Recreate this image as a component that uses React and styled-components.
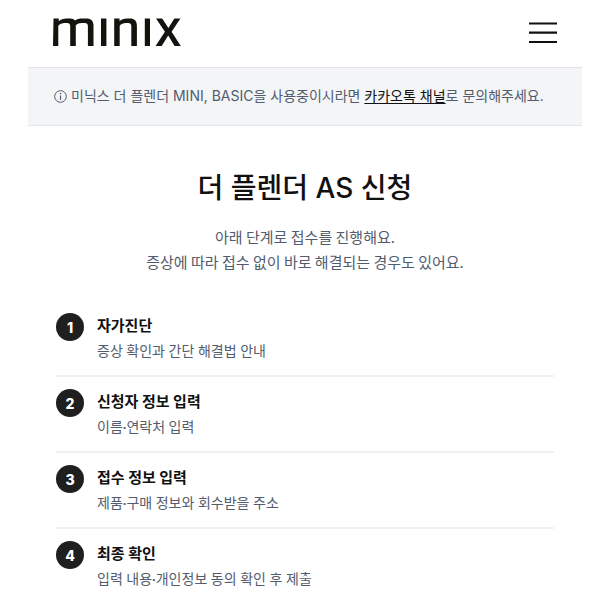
import React from "react";
import styled, { createGlobalStyle } from "styled-components";

const COLOR = {
  INK: "#111111",
  BADGE: "#1f1f1f",
  SLATE: "#525c6e",
  NOTICE: "#f4f5f7",
  LINE: "#e2e4e9",
  DIVIDER: "#f0f1f2",
};

const FONT = {
  MIXED: `Inter, "Noto Sans CJK KR", sans-serif`,
  KOREAN: `"Noto Sans CJK KR", sans-serif`,
  DETAIL: `Lato, "Noto Sans CJK KR", sans-serif`,
};

const STEPS = [
  { title: "자가진단", text: "증상 확인과 간단 해결법 안내" },
  { title: "신청자 정보 입력", text: "이름·연락처 입력" },
  { title: "접수 정보 입력", text: "제품·구매 정보와 회수받을 주소" },
  { title: "최종 확인", text: "입력 내용·개인정보 동의 확인 후 제출" },
];

const GlobalStyle = createGlobalStyle`
  * {
    box-sizing: border-box;
  }

  body {
    margin: 0;
    background-color: #ffffff;
    color: ${COLOR.INK};
    font-family: ${FONT.MIXED};
    word-break: keep-all;
  }
`;

const Page = styled.div`
  padding: 0 18px 0 28px;
`;

const Header = styled.header`
  display: flex;
  justify-content: space-between;
  align-items: center;
  padding: 16px 24px 18px;
`;

const HomeLink = styled.a`
  display: flex;
`;

const MenuButton = styled.button`
  display: flex;
  padding: 0;
  border: 0;
  background: none;
  cursor: pointer;
`;

const Notice = styled.p`
  display: flex;
  align-items: center;
  gap: 4px;
  margin: 0;
  padding: 17px 26px 18px;
  border-top: 1px solid ${COLOR.LINE};
  border-bottom: 1px solid ${COLOR.LINE};
  background-color: ${COLOR.NOTICE};
  color: ${COLOR.SLATE};
  font-size: 14px;
  line-height: 22px;

  svg {
    flex-shrink: 0;
  }

  a {
    color: ${COLOR.INK};
    text-decoration: underline;
    text-underline-offset: 2px;
  }
`;

const Intro = styled.section`
  padding: 40px 28px 27px;
  text-align: center;
`;

const Title = styled.h1`
  margin: 0 0 14px;
  font-size: 28px;
  font-weight: 500;
  line-height: 44px;
`;

const Lead = styled.p`
  margin: 0;
  color: ${COLOR.SLATE};
  font-family: ${FONT.KOREAN};
  font-size: 15px;
  line-height: 25px;
`;

const StepList = styled.ol`
  margin: 0;
  padding: 0 28px;
  list-style: none;
`;

const Step = styled.li`
  display: flex;
  gap: 13px;
  padding: 12px 0;
  border-bottom: 2px solid ${COLOR.DIVIDER};

  &:last-child {
    border-bottom: 0;
  }
`;

const Badge = styled.span`
  display: flex;
  flex-shrink: 0;
  align-items: center;
  justify-content: center;
  width: 28px;
  height: 28px;
  border-radius: 50%;
  background-color: ${COLOR.BADGE};
  color: #ffffff;
  font-size: 14px;
  font-weight: 800;
`;

const StepTitle = styled.h2`
  margin: 0;
  font-size: 15px;
  font-weight: 700;
  line-height: 25px;
`;

const StepText = styled.p`
  margin: 0;
  color: ${COLOR.SLATE};
  font-family: ${FONT.DETAIL};
  font-size: 14px;
  line-height: 25px;
`;

function Logo() {
  return (
    <svg width="130" height="33" viewBox="52 16 130 33" fill="#14140f">
      <path d="M53.5 18.5h5.3v2.7c2-1.8 4.4-2.7 7.5-2.7h4.2c2 0 3.5.7 4.5 2 2-1.4 4.3-2 7.2-2h4.3c4.5 0 7 2.4 7 7V46h-5.6V26.2c0-2.2-1-3.2-3.2-3.2h-3c-2.5 0-4.3.7-5.9 2.3V46h-5.6V26.2c0-2.2-1-3.2-3.2-3.2h-2.4c-2.7 0-4.7.8-6.3 2.8V46h-5.3z" />
      <path d="M101 18.5h5.4V46H101z" />
      <path d="M114.2 18.5h5.3v2.7c2-1.8 4.4-2.7 7.5-2.7h3c4.4 0 6.9 2.4 6.9 7V46h-5.6V26.2c0-2.2-1-3.2-3.2-3.2h-2.2c-2.7 0-4.7.8-6.2 2.8V46h-5.5z" />
      <path d="M144.8 18.5h5.2V46h-5.2z" />
      <path d="M156 18.5h6.2l6.2 9.4 6-9.4h6l-8.8 13.3 9.2 14.2h-6.2l-6.4-10.4-6.5 10.4h-6.1l9.3-14.2z" />
    </svg>
  );
}

function App() {
  return (
    <>
      <GlobalStyle />
      <Page>
        <Header>
          <HomeLink href="#" aria-label="minix">
            <Logo />
          </HomeLink>
          <MenuButton type="button" aria-label="메뉴">
            <svg width="30" height="24" viewBox="0 0 30 24" stroke="#111111">
              <path
                d="M1 2.5h28M1 11.7h28M1 21h28"
                strokeWidth="2.2"
                fill="none"
              />
            </svg>
          </MenuButton>
        </Header>
        <Notice>
          <svg width="13" height="13" viewBox="0 0 13 13" fill="none">
            <circle cx="6.5" cy="6.5" r="5.8" stroke={COLOR.SLATE} />
            <path d="M6.5 5.5v4.3" stroke={COLOR.SLATE} strokeWidth="1.2" />
            <circle cx="6.5" cy="3.6" r="0.8" fill={COLOR.SLATE} />
          </svg>
          <span>
            미닉스 더 플렌더 MINI, BASIC을 사용중이시라면{" "}
            <a href="#">카카오톡 채널</a>로 문의해주세요.
          </span>
        </Notice>
        <Intro>
          <Title>더 플렌더 AS 신청</Title>
          <Lead>
            아래 단계로 접수를 진행해요.
            <br />
            증상에 따라 접수 없이 바로 해결되는 경우도 있어요.
          </Lead>
        </Intro>
        <StepList>
          {STEPS.map((step, index) => (
            <Step key={step.title}>
              <Badge>{index + 1}</Badge>
              <div>
                <StepTitle>{step.title}</StepTitle>
                <StepText>{step.text}</StepText>
              </div>
            </Step>
          ))}
        </StepList>
      </Page>
    </>
  );
}

export default App;
